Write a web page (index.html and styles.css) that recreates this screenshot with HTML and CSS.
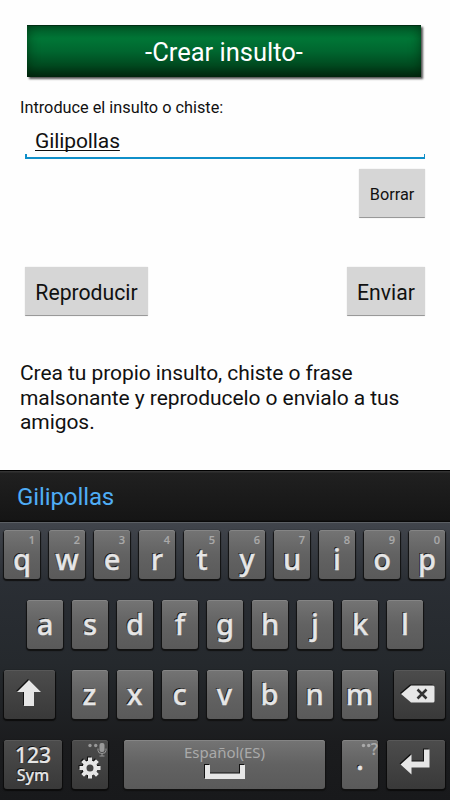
FILE: index.html
```html
<!DOCTYPE html>
<html lang="es">

<head>
    <meta charset="UTF-8">
    <meta name="viewport" content="width=device-width, initial-scale=1.0">
    <title>Crear insulto</title>
    <link rel="stylesheet" href="styles.css">
</head>

<body>
    <main class="content">
        <h1 class="title">-Crear insulto-</h1>
        <div class="label">Introduce el insulto o chiste:</div>
        <div class="field"><span class="field-text">Gilipollas</span></div>
        <div class="clear-row">
            <button class="btn btn-small">Borrar</button>
        </div>
        <div class="actions">
            <button class="btn btn-play">Reproducir</button>
            <button class="btn btn-send">Enviar</button>
        </div>
        <p class="info">Crea tu propio insulto, chiste o frase<br>malsonante y reproducelo o envialo a tus<br>amigos.</p>
    </main>

    <section class="keyboard">
        <div class="suggestions"><span class="suggestion">Gilipollas</span></div>
        <div class="keys">
            <div class="row row-top">
                <div class="key">q<span class="hint">1</span></div>
                <div class="key">w<span class="hint">2</span></div>
                <div class="key">e<span class="hint">3</span></div>
                <div class="key">r<span class="hint">4</span></div>
                <div class="key">t<span class="hint">5</span></div>
                <div class="key">y<span class="hint">6</span></div>
                <div class="key">u<span class="hint">7</span></div>
                <div class="key">i<span class="hint">8</span></div>
                <div class="key">o<span class="hint">9</span></div>
                <div class="key">p<span class="hint">0</span></div>
            </div>
            <div class="row row-middle">
                <div class="key">a</div>
                <div class="key">s</div>
                <div class="key">d</div>
                <div class="key">f</div>
                <div class="key">g</div>
                <div class="key">h</div>
                <div class="key">j</div>
                <div class="key">k</div>
                <div class="key">l</div>
            </div>
            <div class="row row-spread">
                <div class="key key-dark key-shift">
                    <svg class="icon" width="26" height="28" viewBox="0 0 26 28">
                        <path d="M13 1 L25 13 H18 V27 H8 V13 H1 Z" />
                    </svg>
                </div>
                <div class="letters">
                    <div class="key">z</div>
                    <div class="key">x</div>
                    <div class="key">c</div>
                    <div class="key">v</div>
                    <div class="key">b</div>
                    <div class="key">n</div>
                    <div class="key">m</div>
                </div>
                <div class="key key-dark key-delete">
                    <svg class="icon" width="36" height="20" viewBox="0 0 36 20">
                        <path d="M1 10 L11 1.500 H33 Q34.500 1.500 34.500 3 V17 Q34.500 18.500 33 18.500 H11 Z" />
                        <path class="cross" d="M17.500 5.500 L26.500 14.500 M26.500 5.500 L17.500 14.500" />
                    </svg>
                </div>
            </div>
            <div class="row row-bottom">
                <div class="key key-dark key-sym"><span class="num">123</span><span class="sym">Sym</span></div>
                <div class="key key-dark key-settings">
                    <svg class="icon" width="22" height="22" viewBox="-11 -11 22 22">
                        <g class="teeth">
                            <path d="M0 -10.500 V10.500 M-10.500 0 H10.500" />
                            <path d="M-7.400 -7.400 L7.400 7.400 M7.400 -7.400 L-7.400 7.400" />
                        </g>
                        <circle class="gear" r="5.500" />
                    </svg>
                    <svg class="mic" width="20" height="16" viewBox="0 0 20 16">
                        <circle cx="3" cy="3.500" r="1.700" />
                        <circle cx="8.700" cy="3.500" r="1.700" />
                        <rect x="12.500" y="1" width="5" height="9" rx="2" />
                        <path class="mic-line" d="M11 6.500 V8.500 Q11 11.500 15 11.500 T19 8.500 V6.500 M15 11.500 V14 M12.500 14 H17.500" />
                    </svg>
                </div>
                <div class="key key-space">
                    <span class="lang">Español(ES)</span>
                    <svg class="icon" width="40" height="14" viewBox="0 0 40 14">
                        <path d="M0 0 H5 V8.500 H35 V0 H40 V14 H0 Z" />
                    </svg>
                </div>
                <div class="key key-dot">.<span class="hint hint-dot"><svg width="10" height="12" viewBox="0 0 10 12"><circle cx="2.500" cy="2.500" r="1.700" /><circle cx="7.700" cy="2.500" r="1.700" /></svg>?</span></div>
                <div class="key key-dark key-enter">
                    <svg class="icon" width="30" height="26" viewBox="0 0 30 26">
                        <path d="M0.500 15.500 L11.500 5.500 V12.500 H24 V0.500 H29.500 V18.500 H11.500 V25.500 Z" />
                    </svg>
                </div>
            </div>
        </div>
    </section>
</body>

</html>
```
FILE: styles.css
```css
* {
    box-sizing: border-box;
}

body {
    display: flex;
    flex-direction: column;
    width: 450px;
    height: 800px;
    margin: 0;
    overflow: hidden;
    background: #fefefe;
    color: #111;
    font-family: Roboto, sans-serif;
}

.content {
    height: 470px;
    padding: 25px 25px 0;
}

.title {
    height: 52px;
    margin: 0 4px 0 2px;
    border-top: 1px solid #012e14;
    background: linear-gradient(#00662f, #007636 25%, #00662f 50%, #00491f 78%, #002a10);
    box-shadow: inset 0 0 12px rgba(0, 25, 5, 0.6), 2px 2px 2px #555;
    color: #fff;
    font-size: 25.500px;
    font-weight: 400;
    line-height: 52px;
    text-align: center;
}

.label {
    margin: 20px 0 0 -5px;
    font-size: 16.300px;
    line-height: 21px;
}

.field {
    height: 41px;
    padding-left: 10px;
    background:
        linear-gradient(#0f8fc9, #0f8fc9) left bottom / 2px 5px no-repeat,
        linear-gradient(#0f8fc9, #0f8fc9) right bottom / 1px 5px no-repeat,
        linear-gradient(#0f8fc9, #0f8fc9) left bottom / 100% 2px no-repeat;
    font-size: 21px;
    letter-spacing: -0.1px;
    line-height: 46px;
}

.field-text {
    display: inline-block;
    height: 34px;
    text-decoration: underline;
    text-decoration-skip-ink: none;
    text-decoration-thickness: 1px;
    text-underline-offset: 2px;
}

.clear-row {
    display: flex;
    justify-content: flex-end;
    margin-top: 10px;
}

.btn {
    height: 49px;
    padding: 2px 0 0;
    border: 0;
    border-bottom: 1px solid #999;
    border-radius: 1px;
    background: #d6d6d6;
    box-shadow: 0 0 1px #bbb;
    color: #111;
    font-family: Roboto, sans-serif;
    font-size: 21.200px;
}

.btn-small {
    width: 66px;
    font-size: 16.300px;
}

.btn-play {
    width: 123px;
}

.btn-send {
    width: 78px;
}

.actions {
    display: flex;
    justify-content: space-between;
    margin-top: 49px;
}

.info {
    margin: 45px -5px 0;
    font-size: 21px;
    letter-spacing: -0.07px;
    line-height: 24.500px;
    white-space: nowrap;
}

.keyboard {
    height: 330px;
    font-family: "Noto Sans", sans-serif;
}

.suggestions {
    height: 52px;
    padding-left: 17px;
    border-top: 1px solid #000;
    background: linear-gradient(#333 1px, #202020 2px, #151515 49px, #050505);
    color: #4fadf5;
    font-family: Roboto, sans-serif;
    font-size: 24px;
    letter-spacing: -0.1px;
    line-height: 52px;
}

.keys {
    display: flex;
    flex-direction: column;
    gap: 21px;
    height: 278px;
    padding: 7px 5px 0 4px;
    border-top: 1px solid #5b5f64;
    background: linear-gradient(#41454c, #2a2e34 60px, #25292d 140px, #1b1c1e 220px, #18191b);
}

.row,
.letters {
    display: flex;
    gap: 9px;
}

.row-middle {
    padding-left: 23px;
}

.row-spread {
    justify-content: space-between;
}

.row-bottom {
    gap: 16px;
}

.key {
    position: relative;
    display: flex;
    flex-direction: column;
    flex-shrink: 0;
    align-items: center;
    justify-content: center;
    width: 36px;
    height: 49px;
    padding-bottom: 2px;
    border-radius: 3px;
    background: linear-gradient(#747474, #626262 50%, #5a5a5a);
    box-shadow: inset 0 1px 0 #858585, 0 1px 1px 1px #111;
    color: #e6e6e6;
    font-size: 29px;
    font-weight: 500;
    line-height: 47px;
    text-shadow: -1px -1px 0 #111;
    -webkit-text-stroke: 0.4px #e6e6e6;
}

.row-top .key {
    padding: 8px 0 0;
    line-height: 41px;
}

.key-dark {
    background: linear-gradient(#4c4c4c, #393939);
    box-shadow: inset 0 1px 0 #585858, 0 1px 1px 1px #0c0c0c;
}

.hint {
    position: absolute;
    top: 2px;
    right: 5px;
    color: #aaa;
    font-size: 11px;
    line-height: 15px;
    text-shadow: none;
    -webkit-text-stroke: 0.2px #aaa;
}

.key-shift,
.key-delete {
    width: 51px;
}

.key-shift {
    padding: 0 1px 3px 0;
}

.key-delete {
    padding-right: 3px;
}

.key-sym,
.key-enter {
    width: 58px;
}

.key-sym {
    margin-right: -6px;
    -webkit-text-stroke-width: 0.2px;
}

.key-enter {
    margin-left: -7px;
    padding: 0 3px 6px 0;
}

.key-space {
    width: 201px;
}

.icon {
    fill: #e6e6e6;
    filter: drop-shadow(-1px -1px 0 #111);
}

.cross {
    fill: none;
    stroke: #333;
    stroke-width: 2.500;
}

.num {
    font-size: 21px;
    line-height: 24px;
}

.sym {
    font-size: 16px;
    line-height: 17px;
}

.key-settings .icon {
    margin-top: 9px;
}

.teeth {
    stroke: #e6e6e6;
    stroke-width: 4;
}

.gear {
    fill: #444;
    stroke: #e6e6e6;
    stroke-width: 4;
}

.mic {
    position: absolute;
    top: 2px;
    right: 1px;
    fill: #999;
}

.mic-line {
    fill: none;
    stroke: #999;
}

.lang {
    color: #aaa;
    font-size: 15px;
    font-weight: 400;
    line-height: 22px;
    text-shadow: none;
    -webkit-text-stroke: 0;
}

.key-space .icon {
    margin: 2px 0 7px;
}

.key-dot {
    margin-left: 1px;
    padding-bottom: 12px;
    line-height: 37px;
}

.hint-dot {
    top: 1px;
    right: 0;
    display: flex;
    font-size: 16px;
    line-height: 16px;
}

.hint-dot svg {
    margin-top: 2px;
    fill: #aaa;
}
```
